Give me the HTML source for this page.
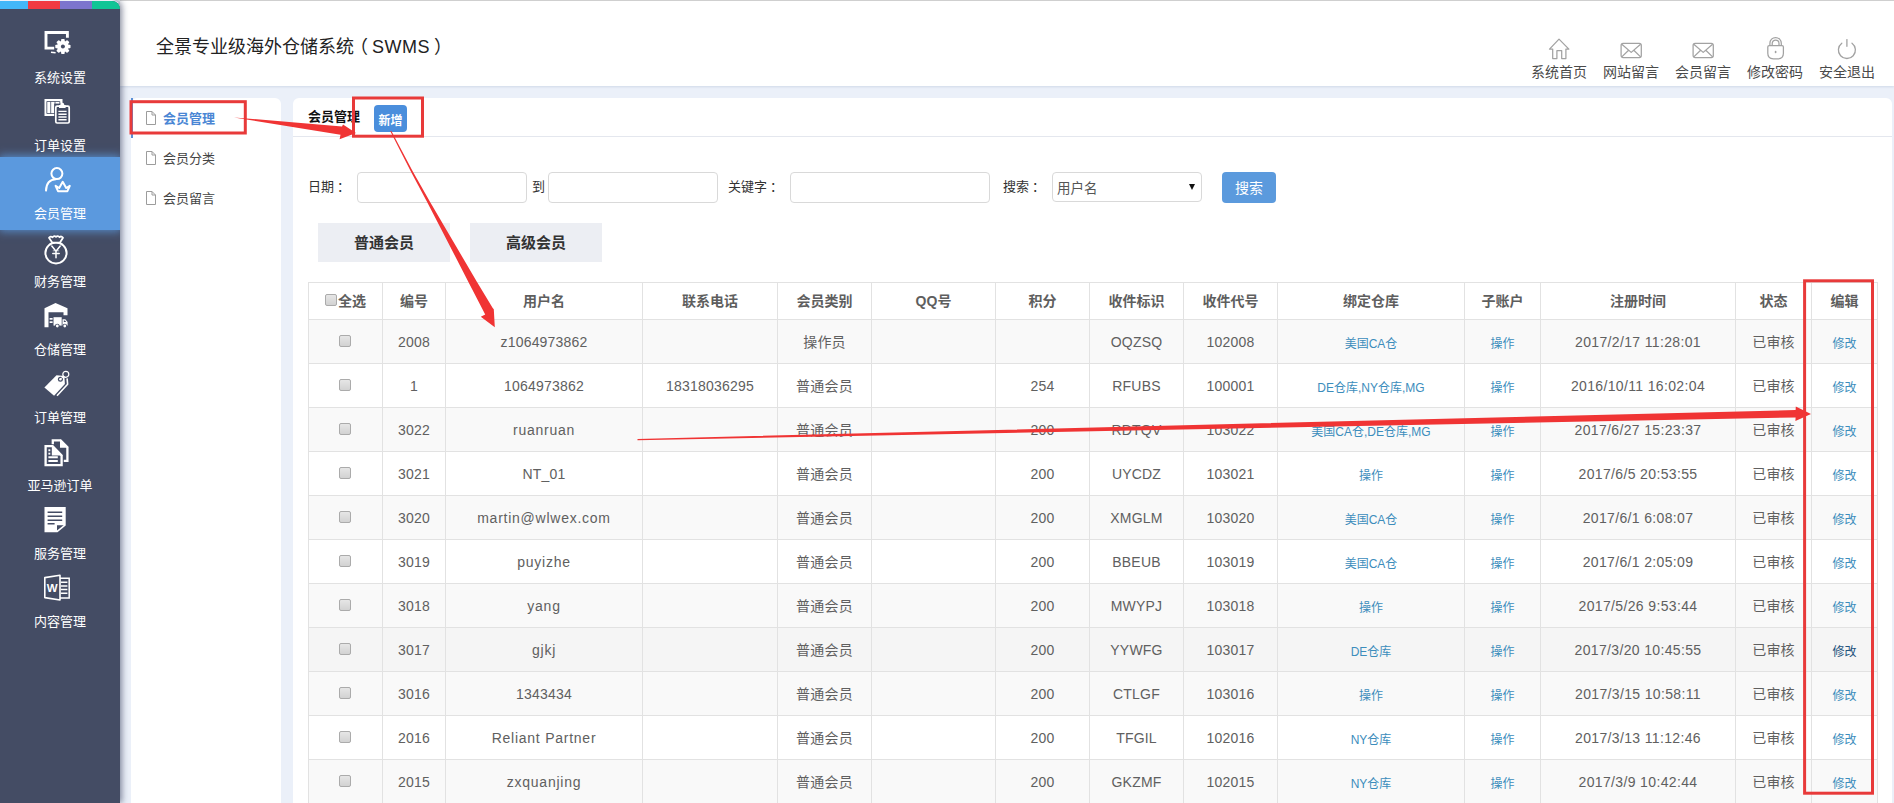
<!DOCTYPE html>
<html lang="zh-CN">
<head>
<meta charset="utf-8">
<title>全景专业级海外仓储系统（SWMS）</title>
<style>
*{box-sizing:border-box;margin:0;padding:0}
html,body{width:1894px;height:803px;overflow:hidden}
body{position:relative;background:#ebf0f9;font-family:"Liberation Sans","Noto Sans CJK SC",sans-serif;font-size:14px;color:#555}
a{text-decoration:none;color:#3c8dbc}
.abs{position:absolute}

/* ---------- sidebar ---------- */
#side{position:absolute;left:0;top:1px;width:120px;height:802px;background:#444c64;border-top-right-radius:8px;overflow:hidden;z-index:5}
#sideshadow{position:absolute;left:0;top:0;width:120px;height:803px;border-top-right-radius:8px;box-shadow:2px 0 6px rgba(40,50,80,.55);z-index:4}
#stripe{position:absolute;left:0;top:0;width:120px;height:8px;display:flex}
#stripe i{display:block;height:8px;flex:none}
.nav{position:absolute;left:0;width:120px;height:68px;text-align:center;color:#fff}
.nav svg{position:absolute;left:44px;top:10px;width:26px;height:26px;overflow:visible}
.nav span{position:absolute;left:0;width:120px;top:49px;font-size:13px;line-height:16px;color:#fff}
#act{position:absolute;left:0;top:156px;width:120px;height:73px;background:#5b99de;box-shadow:0 0 9px 1px rgba(91,153,222,.9)}

/* ---------- header ---------- */
#head{position:absolute;left:120px;top:0;width:1774px;height:86px;background:#fff;border-top:1px solid #cfcfcf;box-shadow:0 1px 2px rgba(170,185,210,.4)}
#title{position:absolute;left:36px;top:33px;font-size:18px;line-height:26px;color:#222;white-space:nowrap}
.top{position:absolute;top:35px;width:72px;height:46px;text-align:center;color:#4a4a4a;font-size:14px}
.top svg{position:absolute;left:24px;top:0;width:24px;height:24px}
.top span{position:absolute;left:0;top:28px;width:72px;line-height:16px;white-space:nowrap}

/* ---------- sub menu ---------- */
#sub{position:absolute;left:131px;top:98px;width:150px;height:720px;background:#fff;border-radius:6px 6px 0 0}
.sm{position:absolute;left:0;width:150px;height:40px;font-size:13px;color:#444;line-height:40px}
.sm svg{position:absolute;left:15px;top:13px;width:10px;height:14px}
.sm span{position:absolute;left:32px;top:1px}
.sm.on{border-left:2px solid #5b8fd6;color:#4a86d4;font-weight:bold}
.sm.on svg{left:13px}
.sm.on span{left:30px}

/* ---------- main ---------- */
#main{position:absolute;left:293px;top:98px;width:1599px;height:720px;background:#fff;border-radius:6px 6px 0 0}
#ph{position:absolute;left:0;top:0;width:1599px;height:39px;border-bottom:1px solid #e4e7ee}
#ph b{position:absolute;left:15px;top:10px;font-size:13px;line-height:18px;color:#111}
#add{position:absolute;left:81px;top:7px;width:33px;height:27px;background:#4a8edc;border-radius:4px;color:#fff;font-size:12px;line-height:32px;font-weight:bold;text-align:center}
.lb{position:absolute;top:73px;height:31px;line-height:31px;font-size:13px;color:#333;white-space:nowrap}
.c{position:relative;left:3px}
.ip{position:absolute;top:74px;height:31px;border:1px solid #d9d9d9;border-radius:4px;background:#fff}
#sel{position:absolute;left:759px;top:74px;width:150px;height:30px;border:1px solid #d9d9d9;border-radius:4px;background:#fff;font-size:13.500px;color:#555;line-height:31px;padding-left:4px}
#sel:after{content:"";position:absolute;right:6px;top:11px;border:3.5px solid transparent;border-top:6px solid #111;border-bottom:0}
#sbtn{position:absolute;left:929px;top:74px;width:54px;height:31px;background:#5b9add;border-radius:4px;color:#fff;font-size:14px;line-height:33px;text-align:center}
.tab{position:absolute;top:125px;width:132px;height:39px;background:#eceef3;color:#333;font-weight:bold;font-size:15px;line-height:39px;text-align:center}

/* ---------- table ---------- */
#tb{position:absolute;left:15px;top:184px;width:1569px;border-collapse:collapse;table-layout:fixed;font-size:14px;color:#606060}
#tb th,#tb td{border:1px solid #e2e2e2;text-align:center;vertical-align:middle;padding:0;white-space:nowrap;overflow:hidden}
#tb th{height:37px;padding-bottom:3px;font-weight:bold;color:#5e5e5e;font-size:14px}
#tb td{height:44px;letter-spacing:.2px}
#tb td.d{letter-spacing:.35px}
#tb td.l{letter-spacing:.75px}
#tb tr.o td{background:#f9f9f9}
#tb tr.h td{background:#f5f5f5}
#tb td a{font-size:12px;color:#3c8dbc;letter-spacing:0;position:relative;top:1px}
#tb td.z{padding-bottom:2px}
#tb tr.h td.e a{color:#23527c}
.cb{position:relative;top:-2px;display:inline-block;width:12px;height:12px;border:1px solid #ababab;border-radius:2px;background:linear-gradient(#e6e6e6,#d2d2d2);vertical-align:middle}
td .cb{left:-1px}
th .cb{margin-right:1px;top:-2px}

#anno{position:absolute;left:0;top:0;width:1894px;height:803px;z-index:20;pointer-events:none}
</style>
</head>
<body>

<!-- SIDEBAR -->
<div id="sideshadow"></div>
<div id="side">
  <div id="act"></div>
  <div id="stripe"><i style="width:28px;background:#43b7f8"></i><i style="width:32px;background:#f03a42"></i><i style="width:32px;background:#7c74cd"></i><i style="width:28px;background:#10c596"></i></div>
  <div class="nav" style="top:20px"><svg viewBox="0 0 26 26"><path d="M10.200 17.100H2V1.500h21.400v5.200" fill="none" stroke="#fff" stroke-width="2.900"/><path d="M7 21.200l4.600.5" stroke="#fff" stroke-width="1.500"/><g transform="translate(18.900 15.500)"><circle r="5.800" fill="#fff"/><g fill="#fff"><rect x="-1.800" y="-7.600" width="3.600" height="15.200" rx=".8"/><rect x="-1.800" y="-7.600" width="3.600" height="15.200" rx=".8" transform="rotate(45)"/><rect x="-1.800" y="-7.600" width="3.600" height="15.200" rx=".8" transform="rotate(90)"/><rect x="-1.800" y="-7.600" width="3.600" height="15.200" rx=".8" transform="rotate(135)"/></g><circle r="2" fill="#444c64"/></g></svg><span>系统设置</span></div>
  <div class="nav" style="top:88px"><svg viewBox="0 0 26 26"><rect x=".5" y="0" width="18" height="17" fill="#fff"/><path d="M2.8 2.5h13v12h-13zM6.7 2.5v12M11 2.5v12" fill="none" stroke="#444c64" stroke-width=".8"/><rect x="10.200" y="4.600" width="16.400" height="21" fill="#444c64"/><rect x="11.800" y="7.200" width="13.400" height="16.800" rx="1.300" fill="#444c64" stroke="#fff" stroke-width="1.700"/><circle cx="18.3" cy="5.6" r="1.9" fill="#fff"/><rect x="15" y="6" width="6.6" height="3" fill="#fff"/><path d="M14.400 12.400h8.200M14.400 15.200h8.200M14.400 18h8.200M14.400 20.800h8.200" stroke="#fff" stroke-width="1.4"/></svg><span>订单设置</span></div>
  <div class="nav" style="top:156px"><svg viewBox="0 0 26 26"><g fill="none" stroke="#fff" stroke-width="2" stroke-linecap="round" stroke-linejoin="round"><circle cx="12.9" cy="6.6" r="5.5"/><path d="M2 23.6C2.3 16 6.5 12.6 11.8 12.3"/><path d="M11.600 18.800L14 24.200H23.400L25.800 18.800L22.200 21L18.700 14.800L15.200 21Z"/></g></svg><span>会员管理</span></div>
  <div class="nav" style="top:224px"><svg viewBox="0 0 26 26"><g fill="none" stroke="#fff" stroke-linecap="round" stroke-linejoin="round"><ellipse cx="12" cy="18" rx="10.6" ry="10.4" stroke-width="2"/><path d="M8.2 7.6L5 2.8Q6.6.6 8.6 2.2 10.200.2 12 1.900 13.800.2 15.600 2.2 17.400.6 19 2.800L16 7.600z" stroke-width="1.800" fill="#444c64"/><path d="M7.8 11l4.200 5.200 4.200-5.200M12 16.200v6.600M8.800 18.600h6.400" stroke-width="1.500"/><path d="M9.200 15.800h5.600" stroke-width="1" opacity=".6"/></g></svg><span>财务管理</span></div>
  <div class="nav" style="top:292px"><svg viewBox="0 0 26 26"><path d="M.5 24.300V5.300L11.500 0l12 5.300v6.900h-4V9.200h-15v15.100z" fill="#fff"/><rect x="9.500" y="14.200" width="8.200" height="8.400" fill="#fff"/><path d="M18.500 16.200h2.800l2.300 2.900v3.500h-5.100z" fill="#fff"/><path d="M19.800 17.400h1.200l1.200 1.600h-2.400z" fill="#444c64"/><circle cx="13.300" cy="23" r="2.300" fill="#444c64"/><circle cx="13.300" cy="23" r="1.400" fill="#fff"/><circle cx="20.800" cy="23" r="2.300" fill="#444c64"/><circle cx="20.800" cy="23" r="1.400" fill="#fff"/><rect x="5.600" y="15" width="3" height="1.700" fill="#fff"/><rect x="5.600" y="18.300" width="3" height="1.700" fill="#fff"/></svg><span>仓储管理</span></div>
  <div class="nav" style="top:360px"><svg viewBox="0 0 26 26"><path d="M13 24.700L23.600 13.200 23.100 7.400" fill="none" stroke="#fff" stroke-width="1.600" stroke-linejoin="round"/><path d="M.4 16.400l9.700 8.400 10.800-11.700-.5-8.100-7.900-.8z" fill="#fff"/><circle cx="16.400" cy="8.200" r="2.500" fill="#444c64"/><circle cx="16.400" cy="8.200" r="1.200" fill="#fff"/><circle cx="21.800" cy="3.300" r="3" fill="none" stroke="#fff" stroke-width="1.200"/><path d="M16.400 8.200l3.400-3" stroke="#fff" stroke-width="1"/></svg><span>订单管理</span></div>
  <div class="nav" style="top:428px"><svg viewBox="0 0 26 26"><path d="M8.800 5.200V1.400h7.800l6.800 6.900V21.800h-3.600" fill="none" stroke="#fff" stroke-width="2.300"/><path d="M16 .3v8.500h8.500z" fill="#fff"/><path d="M1.600 7.100h7l9 9.300v9.700H1.600z" fill="#444c64" stroke="#fff" stroke-width="2.300"/><path d="M7.800 6v10.600h10.900z" fill="#fff"/><rect x="4.400" y="10.300" width="1.900" height="1.900" fill="#fff"/><rect x="4.400" y="13.700" width="1.900" height="1.900" fill="#fff"/><path d="M4.400 18.300h9.400M4.400 22h9.400" stroke="#fff" stroke-width="2"/></svg><span>亚马逊订单</span></div>
  <div class="nav" style="top:496px"><svg viewBox="0 0 26 26"><path d="M.5 0h21.200v18.600l-8.200 6.600H.5z" fill="#fff"/><path d="M13 18.200h6.600L13 23.500z" fill="#444c64"/><path d="M3.600 5.200h14.600M3.600 9.300h14.600M3.600 13.300h14.600M3.600 16.800h7" stroke="#444c64" stroke-width="1.500"/></svg><span>服务管理</span></div>
  <div class="nav" style="top:564px"><svg viewBox="0 0 26 26"><path d="M.8 2.600L16 .3V25L.8 22.600z" fill="none" stroke="#fff" stroke-width="1.600" stroke-linejoin="round"/><path d="M16 3.300h9.200v19.800H16" fill="none" stroke="#fff" stroke-width="1.500"/><path d="M16.800 7.200h6.600M16.800 10.900h6.600M16.800 14.600h6.600M16.800 18.300h6.600" stroke="#fff" stroke-width="1.500"/><text x="8.300" y="16.800" text-anchor="middle" font-family="Liberation Sans, sans-serif" font-weight="bold" font-size="11.500" fill="#fff">W</text></svg><span>内容管理</span></div>
</div>

<!-- HEADER -->
<div id="head">
  <div id="title">全景专业级海外仓储系统<span style="position:relative;left:-4px">（</span><span style="letter-spacing:.5px">SWMS</span><span style="position:relative;left:4px">）</span></div>
  <div class="top" style="left:1403px"><svg viewBox="0 0 24 24"><path d="M12 3.100L2.500 13.100h3.200v9.500h4.200v-7.900h4.800v7.900h4.200v-9.500h3z" fill="none" stroke="#a2a2a2" stroke-width="1.250" stroke-linejoin="round"/></svg><span>系统首页</span></div>
  <div class="top" style="left:1475px"><svg viewBox="0 0 24 24"><g fill="none" stroke="#a2a2a2" stroke-width="1.250" stroke-linejoin="round"><rect x="2.100" y="7.400" width="20.200" height="14.200" rx="2"/><path d="M2.800 8.200l9.400 8.200 9.400-8.200M2.800 20.900l6.800-6.600M21.600 20.900l-6.800-6.600"/></g></svg><span>网站留言</span></div>
  <div class="top" style="left:1547px"><svg viewBox="0 0 24 24"><g fill="none" stroke="#a2a2a2" stroke-width="1.250" stroke-linejoin="round"><rect x="2.100" y="7.400" width="20.200" height="14.200" rx="2"/><path d="M2.800 8.200l9.400 8.200 9.400-8.200M2.800 20.900l6.800-6.600M21.600 20.900l-6.800-6.600"/></g></svg><span>会员留言</span></div>
  <div class="top" style="left:1619px"><svg viewBox="0 0 24 24"><g fill="none" stroke="#a2a2a2" stroke-width="1.250"><path d="M6.200 9.600h12.800q1.400 0 1.400 1.400v6.300q0 5.500-5.500 5.500h-4.600q-5.500 0-5.500-5.500V11q0-1.400 1.400-1.400z"/><path d="M6.900 9.600V7.200a5.700 5.700 0 0 1 11.400 0v2.400M9.200 9.600V7.400a3.400 3.400 0 0 1 6.800 0v2.200"/></g><ellipse cx="12.600" cy="16" rx=".9" ry="1.300" fill="#a2a2a2"/></svg><span>修改密码</span></div>
  <div class="top" style="left:1691px"><svg viewBox="0 0 24 24"><g fill="none" stroke="#a2a2a2" stroke-width="1.300" stroke-linecap="round"><path d="M17 7.200A8.500 8.500 0 1 1 6.800 7.200"/><path d="M11.900 3.600v6.700"/></g></svg><span>安全退出</span></div>
</div>

<!-- SUBMENU -->
<div id="sub">
  <div class="sm on" style="top:0px"><svg viewBox="0 0 10 14"><path d="M.5.500h5.500l3.500 3.500v9.500h-9z" fill="#fff" stroke="#9c9c9c" stroke-width="1"/><path d="M6 .5v3.500h3.500" fill="none" stroke="#9c9c9c" stroke-width="1"/></svg><span>会员管理</span></div>
  <div class="sm" style="top:40px"><svg viewBox="0 0 10 14"><path d="M.5.500h5.500l3.500 3.500v9.500h-9z" fill="#fff" stroke="#9c9c9c" stroke-width="1"/><path d="M6 .5v3.500h3.500" fill="none" stroke="#9c9c9c" stroke-width="1"/></svg><span>会员分类</span></div>
  <div class="sm" style="top:80px"><svg viewBox="0 0 10 14"><path d="M.5.500h5.500l3.500 3.500v9.500h-9z" fill="#fff" stroke="#9c9c9c" stroke-width="1"/><path d="M6 .5v3.500h3.500" fill="none" stroke="#9c9c9c" stroke-width="1"/></svg><span>会员留言</span></div>
</div>

<!-- MAIN -->
<div id="main">
  <div id="ph"><b>会员管理</b><div id="add">新增</div></div>
  <div class="lb" style="left:15px">日期<span class="c">：</span></div>
  <div class="ip" style="left:64px;width:170px"></div>
  <div class="lb" style="left:239px">到</div>
  <div class="ip" style="left:255px;width:170px"></div>
  <div class="lb" style="left:435px">关键字<span class="c">：</span></div>
  <div class="ip" style="left:497px;width:200px"></div>
  <div class="lb" style="left:710px">搜索<span class="c">：</span></div>
  <div id="sel">用户名</div>
  <div id="sbtn">搜索</div>
  <div class="tab" style="left:25px">普通会员</div>
  <div class="tab" style="left:177px">高级会员</div>
  <table id="tb"><colgroup><col style="width:74px"><col style="width:63px"><col style="width:197px"><col style="width:135px"><col style="width:94px"><col style="width:124px"><col style="width:94px"><col style="width:94px"><col style="width:94px"><col style="width:187px"><col style="width:76px"><col style="width:195px"><col style="width:76px"><col style="width:66px"></colgroup><tr><th><i class="cb"></i>全选</th><th>编号</th><th>用户名</th><th>联系电话</th><th>会员类别</th><th>QQ号</th><th>积分</th><th>收件标识</th><th>收件代号</th><th>绑定仓库</th><th>子账户</th><th>注册时间</th><th>状态</th><th>编辑</th></tr><tr class="o"><td><i class="cb"></i></td><td>2008</td><td>z1064973862</td><td></td><td class="z">操作员</td><td></td><td></td><td>OQZSQ</td><td>102008</td><td><a>美国CA仓</a></td><td><a>操作</a></td><td class="d">2017/2/17 11:28:01</td><td class="z">已审核</td><td class="e"><a>修改</a></td></tr>
<tr class=""><td><i class="cb"></i></td><td>1</td><td>1064973862</td><td>18318036295</td><td class="z">普通会员</td><td></td><td>254</td><td>RFUBS</td><td>100001</td><td><a>DE仓库,NY仓库,MG</a></td><td><a>操作</a></td><td class="d">2016/10/11 16:02:04</td><td class="z">已审核</td><td class="e"><a>修改</a></td></tr>
<tr class="o"><td><i class="cb"></i></td><td>3022</td><td class="l">ruanruan</td><td></td><td class="z">普通会员</td><td></td><td>200</td><td>RDTQV</td><td>103022</td><td><a>美国CA仓,DE仓库,MG</a></td><td><a>操作</a></td><td class="d">2017/6/27 15:23:37</td><td class="z">已审核</td><td class="e"><a>修改</a></td></tr>
<tr class=""><td><i class="cb"></i></td><td>3021</td><td>NT_01</td><td></td><td class="z">普通会员</td><td></td><td>200</td><td>UYCDZ</td><td>103021</td><td><a>操作</a></td><td><a>操作</a></td><td class="d">2017/6/5 20:53:55</td><td class="z">已审核</td><td class="e"><a>修改</a></td></tr>
<tr class="o"><td><i class="cb"></i></td><td>3020</td><td class="l">martin@wlwex.com</td><td></td><td class="z">普通会员</td><td></td><td>200</td><td>XMGLM</td><td>103020</td><td><a>美国CA仓</a></td><td><a>操作</a></td><td class="d">2017/6/1 6:08:07</td><td class="z">已审核</td><td class="e"><a>修改</a></td></tr>
<tr class=""><td><i class="cb"></i></td><td>3019</td><td class="l">puyizhe</td><td></td><td class="z">普通会员</td><td></td><td>200</td><td>BBEUB</td><td>103019</td><td><a>美国CA仓</a></td><td><a>操作</a></td><td class="d">2017/6/1 2:05:09</td><td class="z">已审核</td><td class="e"><a>修改</a></td></tr>
<tr class="o"><td><i class="cb"></i></td><td>3018</td><td class="l">yang</td><td></td><td class="z">普通会员</td><td></td><td>200</td><td>MWYPJ</td><td>103018</td><td><a>操作</a></td><td><a>操作</a></td><td class="d">2017/5/26 9:53:44</td><td class="z">已审核</td><td class="e"><a>修改</a></td></tr>
<tr class="h"><td><i class="cb"></i></td><td>3017</td><td class="l">gjkj</td><td></td><td class="z">普通会员</td><td></td><td>200</td><td>YYWFG</td><td>103017</td><td><a>DE仓库</a></td><td><a>操作</a></td><td class="d">2017/3/20 10:45:55</td><td class="z">已审核</td><td class="e"><a>修改</a></td></tr>
<tr class="o"><td><i class="cb"></i></td><td>3016</td><td>1343434</td><td></td><td class="z">普通会员</td><td></td><td>200</td><td>CTLGF</td><td>103016</td><td><a>操作</a></td><td><a>操作</a></td><td class="d">2017/3/15 10:58:11</td><td class="z">已审核</td><td class="e"><a>修改</a></td></tr>
<tr class=""><td><i class="cb"></i></td><td>2016</td><td class="l">Reliant Partner</td><td></td><td class="z">普通会员</td><td></td><td>200</td><td>TFGIL</td><td>102016</td><td><a>NY仓库</a></td><td><a>操作</a></td><td class="d">2017/3/13 11:12:46</td><td class="z">已审核</td><td class="e"><a>修改</a></td></tr>
<tr class="o"><td><i class="cb"></i></td><td>2015</td><td class="l">zxquanjing</td><td></td><td class="z">普通会员</td><td></td><td>200</td><td>GKZMF</td><td>102015</td><td><a>NY仓库</a></td><td><a>操作</a></td><td class="d">2017/3/9 10:42:44</td><td class="z">已审核</td><td class="e"><a>修改</a></td></tr>
<tr class=""><td><i class="cb"></i></td><td>2014</td><td>test01</td><td></td><td class="z">普通会员</td><td></td><td>200</td><td>KQWEP</td><td>102014</td><td><a>NY仓库</a></td><td><a>操作</a></td><td class="d">2017/3/8 9:12:10</td><td class="z">已审核</td><td class="e"><a>修改</a></td></tr>
</table>
</div>

<svg id="anno" viewBox="0 0 1894 803">
<g fill="none" stroke="#e83a3a" stroke-width="3">
<rect x="131" y="101.700" width="114.300" height="31.300"/>
<rect x="353.500" y="98" width="69" height="38.200"/>
<rect x="1804.600" y="280.800" width="67.900" height="512.400"/>
</g>
<g fill="#f03434">
<polygon points="234,117.400 342,126.500 343,124.400 356,133 339.600,139.200 340.500,134.800"/>
<polygon points="391.400,131 413.100,172 430.100,202 446.500,230 464.100,260 477,282 492.700,308 493.800,309.300 494.800,327.200 480.800,316.800 485.200,314.500 468.400,282 457.100,260 441.600,230 427.100,202 411.100,172 390.200,131"/>
<polygon points="637.500,438.900 1795.600,410 1795.800,406.600 1811,414 1795.400,421 1795.600,417.500 637.500,440.200"/>
</g>
</svg>
</body>
</html>
